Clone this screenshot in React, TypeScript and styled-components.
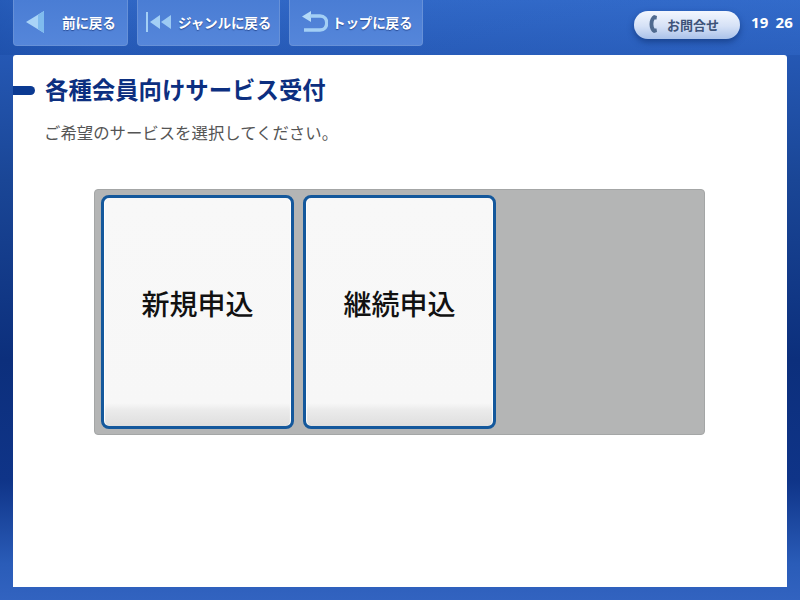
import styled, { createGlobalStyle } from "styled-components";

const GlobalStyle = createGlobalStyle`
  html, body {
    margin: 0;
    padding: 0;
  }
  body {
    font-family: "Noto Sans CJK JP", "Noto Sans", sans-serif;
  }
`;

const Screen = styled.div`
  width: 800px;
  height: 600px;
  display: flex;
  flex-direction: column;
  overflow: hidden;
  background: linear-gradient(
    180deg,
    #2f66c4 0%,
    #2558b4 9%,
    #1a4696 30%,
    #0c2f7c 60%,
    #0f3488 80%,
    #2a5cb8 94%,
    #3263c0 100%
  );
`;

const Header = styled.header`
  height: 55px;
  flex: none;
  display: flex;
  padding: 0 7px 0 13px;
  box-sizing: border-box;
  align-items: flex-start;
  background: linear-gradient(90deg, rgba(20, 70, 160, 0.35) 0%, rgba(40, 100, 200, 0) 12%, rgba(60, 120, 220, 0.25) 100%);
`;

const NavGroup = styled.nav`
  display: flex;
  gap: 9px;
`;

const NavButton = styled.div<{ $width: number; $gap: number; $pad: number }>`
  width: ${(p) => p.$width}px;
  height: 46px;
  box-sizing: border-box;
  padding: 0 0 2px ${(p) => p.$pad}px;
  display: flex;
  align-items: center;
  gap: ${(p) => p.$gap}px;
  border: 1px solid #6791d8;
  border-top: none;
  border-radius: 0 0 4px 4px;
  background: linear-gradient(180deg, #4a7dd4 0%, #5586da 100%);
  color: #fff;
  font-size: 13.6px;
  font-weight: 700;
  letter-spacing: -0.2px;
  text-shadow: 0 1px 1px rgba(20, 50, 120, 0.7);
  white-space: nowrap;
`;

const Utility = styled.div`
  margin-left: auto;
  display: flex;
  align-items: center;
  height: 28px;
  margin-top: 11px;
  gap: 11px;
`;

const ContactPill = styled.div`
  width: 106px;
  height: 28px;
  box-sizing: border-box;
  padding: 0 0 2px 14px;
  display: flex;
  align-items: center;
  gap: 10px;
  border-radius: 14px;
  background: linear-gradient(180deg, #f3f7fe 0%, #d5e1f6 55%, #aac2ea 100%);
  box-shadow: 0 3px 6px rgba(10, 40, 100, 0.55);
  color: #3d5379;
  font-size: 13px;
  font-weight: 700;
`;

const Clock = styled.div`
  width: 42px;
  margin-bottom: 6px;
  display: flex;
  justify-content: space-between;
  color: #fff;
  font-family: "Open Sans", "Noto Sans", sans-serif;
  font-size: 15px;
  font-weight: 700;
  letter-spacing: 0.2px;
`;

const Main = styled.main`
  flex: none;
  width: 774px;
  height: 532px;
  margin-left: 13px;
  box-sizing: border-box;
  padding-top: 19px;
  background: #fff;
  border-radius: 3px 3px 0 0;
`;

const TitleRow = styled.div`
  display: flex;
  align-items: center;
  gap: 10px;
  height: 32px;
`;

const TitleMark = styled.div`
  width: 22px;
  height: 9px;
  background: #0b3a92;
  border-radius: 0 5px 5px 0;
`;

const Title = styled.h1`
  margin: -3px 0 0;
  color: #0c2f80;
  font-size: 23.4px;
  font-weight: 700;
  line-height: 32px;
  white-space: nowrap;
`;

const Lead = styled.p`
  margin: 14px 0 0 31px;
  color: #555;
  font-size: 16.4px;
  line-height: 24px;
`;

const Panel = styled.section`
  width: 611px;
  height: 246px;
  margin: 45px 0 0 81px;
  box-sizing: border-box;
  padding: 5px 6px;
  display: flex;
  gap: 9px;
  background: #b4b5b5;
  border: 1px solid #a4a6a6;
  border-radius: 4px;
`;

const ServiceCard = styled.div`
  width: 193px;
  height: 234px;
  box-sizing: border-box;
  padding-bottom: 19px;
  display: flex;
  align-items: center;
  justify-content: center;
  border: 3px solid #14589c;
  border-radius: 8px;
  background: linear-gradient(180deg, #f8f8f8 0%, #f7f7f7 90%, #ebebeb 93%, #dedede 100%);
  box-shadow: inset 2px 0 1px -1px #fff, inset -2px 0 1px -1px #fff;
  color: #111;
  font-size: 28px;
  font-weight: 500;
`;

const BackIcon = () => (
  <svg width="19" height="22" viewBox="0 0 19 22">
    <path d="M18 0 L0 11 L18 22 Z" fill="#a9d4f7" />
    <path d="M18 0 L18 22 L12 18 L12 4 Z" fill="#7fbbee" />
  </svg>
);

const FirstIcon = () => (
  <svg width="26" height="20" viewBox="0 0 26 20">
    <rect x="0" y="0" width="2" height="20" fill="#a3cff5" />
    <path d="M14 3 L4 10 L14 17 Z" fill="#a3cff5" />
    <path d="M25 3 L15 10 L25 17 Z" fill="#9ccaf3" />
  </svg>
);

const ReturnIcon = () => (
  <svg width="27" height="21" viewBox="0 0 27 21">
    <path d="M10 0 L1 5.5 L10 11 Z" fill="#b4daf8" />
    <path d="M9 5 H19 C28 5 28 19 19 19 H3" fill="none" stroke="#a3cff5" strokeWidth="3.4" />
  </svg>
);

const PhoneIcon = () => (
  <svg width="9" height="18" viewBox="0 0 9 18">
    <path
      d="M6 0 L9 1 L8.5 4.5 L6.5 4.5 C5 7 5 11 6.5 13.5 L8.5 13.5 L9 17 L6 18 C0 15.5 0 3 6 0 Z"
      fill="#4f6a8f"
    />
  </svg>
);

const App = () => {
  return (
    <>
      <GlobalStyle />
      <Screen>
        <Header>
          <NavGroup>
            <NavButton $width={115} $pad={12} $gap={17}>
              <BackIcon />
              前に戻る
            </NavButton>
            <NavButton $width={143} $pad={8} $gap={6}>
              <FirstIcon />
              ジャンルに戻る
            </NavButton>
            <NavButton $width={134} $pad={11} $gap={4}>
              <ReturnIcon />
              トップに戻る
            </NavButton>
          </NavGroup>
          <Utility>
            <ContactPill>
              <PhoneIcon />
              お問合せ
            </ContactPill>
            <Clock>
              <span>19</span>
              <span>26</span>
            </Clock>
          </Utility>
        </Header>
        <Main>
          <TitleRow>
            <TitleMark />
            <Title>各種会員向けサービス受付</Title>
          </TitleRow>
          <Lead>ご希望のサービスを選択してください。</Lead>
          <Panel>
            <ServiceCard>新規申込</ServiceCard>
            <ServiceCard>継続申込</ServiceCard>
          </Panel>
        </Main>
      </Screen>
    </>
  );
};

export default App;
